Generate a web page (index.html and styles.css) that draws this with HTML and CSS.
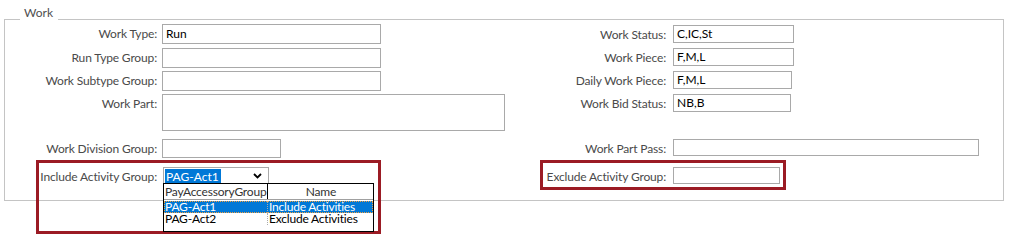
FILE: index.html
```html
<!DOCTYPE html>
<html lang="en">
<head>
    <meta charset="UTF-8">
    <title>Work</title>
    <link rel="stylesheet" href="styles.css">
</head>
<body>
    <div class="group">
        <div class="group-title">Work</div>

        <div class="form-grid">
            <!-- row 1 -->
            <div class="field">
                <span class="label">Work Type:</span>
                <div class="box w-type">Run</div>
            </div>
            <div class="field right first">
                <span class="label">Work Status:</span>
                <div class="box w-small">C,IC,St</div>
            </div>

            <!-- row 2 -->
            <div class="field">
                <span class="label">Run Type Group:</span>
                <div class="box w-type"></div>
            </div>
            <div class="field right">
                <span class="label">Work Piece:</span>
                <div class="box w-small">F,M,L</div>
            </div>

            <!-- row 3 -->
            <div class="field">
                <span class="label">Work Subtype Group:</span>
                <div class="box w-type"></div>
            </div>
            <div class="field right">
                <span class="label">Daily Work Piece:</span>
                <div class="box w-small" style="width: 119px">F,M,L</div>
            </div>

            <!-- row 4 -->
            <div class="field">
                <span class="label">Work Part:</span>
                <div class="box area"></div>
            </div>
            <div class="field right">
                <span class="label">Work Bid Status:</span>
                <div class="box w-small" style="width: 118px">NB,B</div>
            </div>

            <!-- row 5 -->
            <div class="field">
                <span class="label">Work Division Group:</span>
                <div class="box w-div"></div>
            </div>
            <div class="field right">
                <span class="label">Work Part Pass:</span>
                <div class="box w-pass"></div>
            </div>

            <!-- row 6 -->
            <div class="field marked">
                <span class="label">Include Activity Group:</span>
                <div class="combo">
                    <span class="combo-value">PAG-Act1</span>
                    <svg class="chevron" width="9" height="6" viewBox="0 0 9 6">
                        <path d="M1 1 L4.5 4.5 L8 1" fill="none" stroke="#000" stroke-width="1.8"/>
                    </svg>

                    <div class="drop-list">
                        <div class="list-row list-head">
                            <span class="col-a">PayAccessoryGroup</span>
                            <span class="col-b">Name</span>
                        </div>
                        <div class="list-row selected">
                            <span class="col-a">PAG-Act1</span>
                            <span class="col-b">Include Activities</span>
                        </div>
                        <div class="list-row">
                            <span class="col-a">PAG-Act2</span>
                            <span class="col-b">Exclude Activities</span>
                        </div>
                    </div>
                </div>
                <div class="mark mark-left"></div>
            </div>
            <div class="field right marked">
                <span class="label">Exclude Activity Group:</span>
                <div class="box w-excl"></div>
                <div class="mark mark-right"></div>
            </div>
        </div>
    </div>
</body>
</html>
```

FILE: styles.css
```css
/* General */
html, body {
    min-height: 235px;
}

body {
    margin: 0;
    background: #fff;
    font-family: 'Segoe UI', Lato, 'Open Sans', sans-serif;
    font-size: 12px;
    color: #000;
}

/* Group box */
.group {
    margin: 19px 0 34px 4px;
    width: 1000px;
    height: 182px;
    box-sizing: border-box;
    border: 1px solid #c4c4c4;
}

.group-title {
    width: fit-content;
    margin: -14px 0 0 15px;
    padding: 0 5px 0 4px;
    height: 14px;
    line-height: 14px;
    background: #fff;
    color: #4f4f4f;
}

/* Form grid */
.form-grid {
    display: grid;
    grid-template-columns: 515px 1fr;
    grid-template-rows: 24px 23px 23px 45px 28px 19px;
    padding-top: 4px;
}

.field {
    position: relative;
    display: flex;
    align-items: flex-start;
    gap: 5px;
}

.field .label {
    width: 152px;
    flex: none;
    text-align: right;
    line-height: 19px;
    color: #4a4a4a;
    letter-spacing: -0.15px;
    white-space: nowrap;
}

.field.right {
    gap: 7px;
}

.field.right .label {
    width: 146px;
}

.field.first {
    margin-top: 1px;
}

/* Inputs */
.box {
    box-sizing: border-box;
    height: 19px;
    line-height: 17px;
    padding: 0 3px;
    border: 1px solid #a9a9a9;
    background: #fff;
    white-space: nowrap;
}

.w-type {
    width: 219px;
    height: 20px;
}

.w-small { width: 121px; height: 18px; line-height: 16px; }
.w-div { width: 119px; }
.w-pass { width: 306px; height: 17px; }
.w-excl { width: 107px; height: 17px; }

.area {
    width: 343px;
    height: 37px;
}

/* Combo box */
.combo {
    position: relative;
    box-sizing: border-box;
    width: 106px;
    height: 19px;
    margin-left: 1px;
    border: 1px solid #a9a9a9;
    background: #fff;
}

.combo-value {
    display: inline-block;
    margin: 1px 0 0 1px;
    padding: 0 2px 0 1px;
    line-height: 15px;
    background: #0078d7;
    color: #fff;
}

.chevron {
    position: absolute;
    right: 6px;
    top: 5px;
}

/* Drop-down list (opened menu) */
.drop-list {
    position: absolute;
    left: -1px;
    top: 15px;
    width: 211px;
    box-sizing: border-box;
    border: 1px solid #000;
    background: #fff;
    padding-bottom: 6px;
    letter-spacing: -0.2px;
    z-index: 2;
}

.list-row {
    display: flex;
    height: 12px;
    line-height: 12px;
    white-space: nowrap;
}

.list-row .col-a {
    width: 102px;
    flex: none;
    padding-left: 1px;
}

.list-row .col-b {
    flex: 1;
    padding-left: 1px;
    border-left: 1px dotted #aaa;
}

.list-head {
    height: 15px;
    line-height: 15px;
    border-bottom: 1px solid #a0a0a0;
    margin-bottom: 1px;
    color: #333;
}

.list-head .col-b {
    text-align: center;
    border-left: 1px solid #000;
}

.list-row.selected {
    background: #0078d7;
    color: #fff;
    outline: 1px dotted #f0a040;
    outline-offset: -1px;
}

/* Annotation boxes */
.mark {
    position: absolute;
    border: 3px solid #9b1b24;
    box-sizing: border-box;
    pointer-events: none;
}

.mark-left {
    left: 31px;
    top: -7px;
    width: 345px;
    height: 74px;
}

.mark-right {
    left: 20px;
    top: -7px;
    width: 246px;
    height: 30px;
}
```
